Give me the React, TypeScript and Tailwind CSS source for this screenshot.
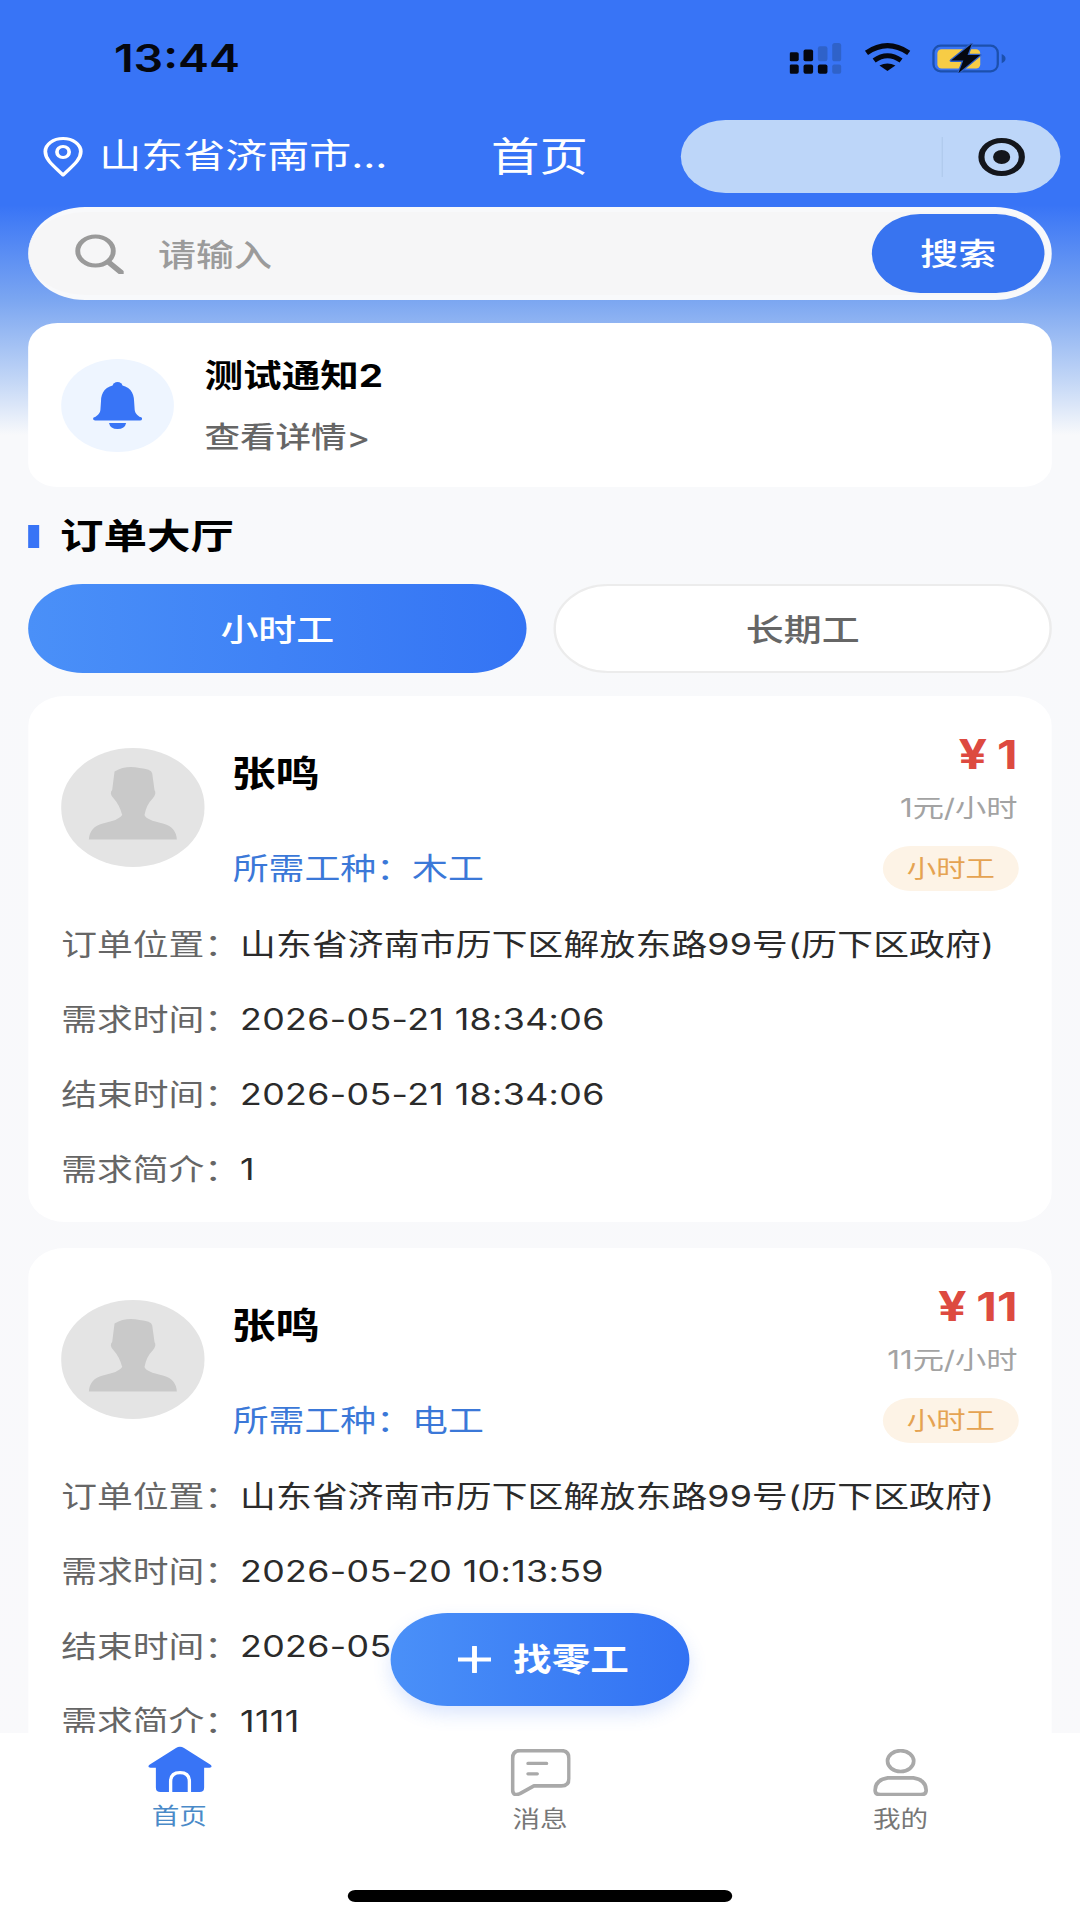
import React from "react";

function Signal() {
  const on = "#05070f";
  const off = "#2f62c9";
  return (
    <svg className="w-[43px] h-[31px]" viewBox="90 70 165 95" preserveAspectRatio="none">
      <rect x="88" y="98" width="30" height="28" rx="6" fill={on} />
      <rect x="88" y="136" width="30" height="28" rx="6" fill={on} />
      <rect x="133" y="90" width="30" height="36" rx="6" fill={on} />
      <rect x="133" y="136" width="30" height="28" rx="6" fill={on} />
      <rect x="178" y="80" width="30" height="46" rx="7" fill={off} />
      <rect x="178" y="136" width="30" height="28" rx="6" fill={on} />
      <rect x="223" y="70" width="28" height="56" rx="8" fill={off} />
      <rect x="223" y="136" width="28" height="28" rx="6" fill={off} />
    </svg>
  );
}

function Wifi() {
  return (
    <svg className="w-[38px] h-[28px] ml-[18px]" viewBox="313 72 140 88" preserveAspectRatio="none">
      <path d="M319 103 Q382 58 446 103" fill="none" stroke="#05070f" strokeWidth="16" />
      <path d="M342 127 Q382 97 423 127" fill="none" stroke="#05070f" strokeWidth="15" />
      <path d="M358 143 Q382 130 406 143 L382 160 Z" fill="#05070f" />
    </svg>
  );
}

function Battery() {
  return (
    <svg className="w-[61px] h-[30px] ml-[17px]" viewBox="515 68 230 92" preserveAspectRatio="none">
      <rect x="520" y="76" width="198" height="79" rx="22" fill="none" stroke="#1c50ad" strokeWidth="7" />
      <rect x="532" y="87" width="132" height="59" rx="13" fill="#f7cc45" />
      <path d="M730 102 Q742 108 742 116 Q742 124 730 130 Z" fill="#1c50ad" />
      <path
        d="M638 70 L574 122 L612 122 L597 160 L664 105 L625 105 Z"
        fill="#05070f"
        stroke="#2f62c9"
        strokeWidth="8"
        paintOrder="stroke"
        strokeLinejoin="round"
      />
    </svg>
  );
}

function Pin() {
  return (
    <svg className="w-[33px] h-[40px] shrink-0" viewBox="0 0 33 40">
      <path
        d="M16.5 38 C9 29 2 23 2 14.5 A14.5 13 0 0 1 31 14.5 C31 23 24 29 16.5 38 Z"
        fill="none"
        stroke="#fff"
        strokeWidth="3"
        strokeLinejoin="round"
      />
      <ellipse cx="16.5" cy="15" rx="5" ry="5.5" fill="none" stroke="#fff" strokeWidth="3" />
    </svg>
  );
}

function Magnifier() {
  return (
    <svg className="w-[40px] h-[40px] shrink-0" viewBox="0 0 40 40">
      <circle cx="17" cy="17" r="14.5" fill="none" stroke="#9a9a9a" strokeWidth="4" />
      <path d="M27.5 28 L38 38.5" stroke="#9a9a9a" strokeWidth="5" strokeLinecap="round" />
    </svg>
  );
}

function Bell() {
  return (
    <svg className="w-[40px] h-[47px]" viewBox="0 0 40 47">
      <circle cx="20" cy="4" r="4" fill="#3874f6" />
      <path
        d="M20 3 C10 3 6.5 11 6.5 19 L6 28 C5.5 32 3 34 1 35.5 L39 35.5 C37 34 34.5 32 34 28 L33.5 19 C33.5 11 30 3 20 3 Z"
        fill="#3874f6"
      />
      <rect x="0" y="35" width="40" height="3.4" rx="1.7" fill="#3874f6" />
      <path d="M13 41 L27 41 Q26 47 20 47 Q14 47 13 41 Z" fill="#3874f6" />
    </svg>
  );
}

function Person() {
  return (
    <svg className="w-full h-full" viewBox="65 55 430 355" preserveAspectRatio="none">
      <path
        d="M225 125 Q260 105 300 115 Q335 118 338 130 L345 180 Q352 190 340 205 Q320 225 315 255 Q320 270 370 280 Q410 290 412 328 L148 328 Q150 290 190 280 Q240 270 248 255 Q240 225 222 205 Q208 190 218 180 Z"
        fill="#c9c9c9"
      />
    </svg>
  );
}

function HomeIcon() {
  return (
    <svg className="w-[52px] h-[46px]" viewBox="55 32 190 140" preserveAspectRatio="none">
      <path
        d="M138 38 Q150 30 162 38 L240 88 Q250 96 238 98 L222 98 L222 158 Q222 172 208 172 L92 172 Q78 172 78 158 L78 98 L62 98 Q50 96 60 88 Z"
        fill="#3874f6"
      />
      <path
        d="M122 172 L122 140 Q122 113 150 113 Q178 113 178 140 L178 172"
        fill="none"
        stroke="#fff"
        strokeWidth="10"
      />
    </svg>
  );
}

function MessageIcon() {
  return (
    <svg className="w-[49px] h-[47px]" viewBox="60 42 180 140" preserveAspectRatio="none">
      <path
        d="M88 47 L212 47 Q235 47 235 70 L235 130 Q235 152 212 152 L130 152 L88 175 Q68 184 66 165 L66 70 Q66 47 88 47 Z"
        fill="none"
        stroke="#a9a9a9"
        strokeWidth="11"
        strokeLinejoin="round"
      />
      <path d="M112 85 L168 85 M112 116 L140 116" stroke="#a9a9a9" strokeWidth="10" strokeLinecap="round" />
    </svg>
  );
}

function UserIcon() {
  return (
    <svg className="w-[45px] h-[47px]" viewBox="68 42 164 140" preserveAspectRatio="none">
      <ellipse cx="150" cy="78" rx="39" ry="31" fill="none" stroke="#a9a9a9" strokeWidth="11" />
      <path
        d="M112 128 L188 128 Q226 134 226 165 Q226 178 210 178 L90 178 Q74 178 74 165 Q74 134 112 128 Z"
        fill="none"
        stroke="#a9a9a9"
        strokeWidth="11"
      />
    </svg>
  );
}

function Row({ label, value }: { label: string; value: string }) {
  const long = value.length > 20;
  return (
    <div className="h-[75px] flex items-center text-[29.2px] whitespace-nowrap">
      <span className="w-[146px] shrink-0 text-[#666]">{label}</span>
      <span className={long ? "text-[#2b2b2b] tracking-[0.17px]" : "text-[#2b2b2b] tracking-[0.3px]"}>{value}</span>
    </div>
  );
}

type Order = {
  yuan: string;
  unit: string;
  skill: string;
  rows: [string, string][];
};

function OrderCard({ order }: { order: Order }) {
  return (
    <div className="shrink-0 h-[526px] bg-white rounded-[30px] pt-[36px] pl-[27px] pr-[27px]">
      <div className="h-[175.5px] flex">
        <div className="w-[117px] h-[119px] mt-[16px] rounded-full bg-[#e4e4e4] shrink-0 overflow-hidden">
          <Person />
        </div>
        <div className="ml-[22px] flex flex-col">
          <div className="h-[50px] mt-[17px] flex items-center text-[36px] font-bold text-black leading-none">张鸣</div>
          <div className="h-[50px] mt-[45px] flex items-center pl-[1px] text-[29.3px] text-[#3b78d8] leading-none">
            所需工种：{order.skill}
          </div>
        </div>
        <div className="ml-auto flex flex-col items-end">
          <div className="h-[44px] mr-[1px] flex items-center text-[39px] font-bold text-[#dd4a40] leading-none">
            <span className="mr-[8px] text-[41px]">¥</span>
            {order.yuan}
          </div>
          <div className="h-[36px] mr-[1px] mt-[14px] flex items-center text-[25.5px] text-[#a3a3a3] leading-none">
            {order.unit}
          </div>
          <div className="h-[45px] mt-[20px] w-[111px] rounded-full bg-[#fdf3e6] flex items-center justify-center text-[24px] text-[#e5a352] leading-none">
            小时工
          </div>
        </div>
      </div>
      {order.rows.map(([l, v]) => (
        <Row key={l} label={l} value={v} />
      ))}
    </div>
  );
}

const orders: Order[] = [
  {
    yuan: "1",
    unit: "1元/小时",
    skill: "木工",
    rows: [
      ["订单位置：", "山东省济南市历下区解放东路99号(历下区政府)"],
      ["需求时间：", "2026-05-21 18:34:06"],
      ["结束时间：", "2026-05-21 18:34:06"],
      ["需求简介：", "1"],
    ],
  },
  {
    yuan: "11",
    unit: "11元/小时",
    skill: "电工",
    rows: [
      ["订单位置：", "山东省济南市历下区解放东路99号(历下区政府)"],
      ["需求时间：", "2026-05-20 10:13:59"],
      ["结束时间：", "2026-05-20 10:13:59"],
      ["需求简介：", "1111"],
    ],
  },
];

export default function App() {
  return (
    <div className="w-[1080px] h-[1920px] overflow-hidden">
      <div className="relative w-[882px] h-[1920px] origin-top-left scale-x-[1.2245] flex flex-col overflow-hidden font-['Inter','Noto_Sans_CJK_SC',sans-serif] bg-[linear-gradient(180deg,#3874f6_0px,#3874f6_205px,#7ba6f1_300px,#c2d6f6_380px,#f8f9fb_435px,#f9f9fb_1920px)]">
        {/* status bar */}
        <div className="h-[120px] shrink-0 flex items-start pt-[43px] pl-[93px]">
          <span className="text-[38px] leading-[31px] font-semibold text-[#05070f]">13:44</span>
          <div className="ml-auto mr-[60px] flex items-start">
            <Signal />
            <Wifi />
            <Battery />
          </div>
        </div>

        {/* nav */}
        <div className="h-[73px] shrink-0 flex items-center pl-[35px] pr-[16px]">
          <Pin />
          <span className="ml-[13px] w-[286px] text-[34.3px] text-white whitespace-nowrap leading-none">山东省济南市...</span>
          <span className="ml-[34px] mt-[3px] text-[39.5px] text-white leading-none">首页</span>
          <div className="ml-auto w-[310px] h-[73px] rounded-full bg-[#bdd6f9] flex items-center">
            <div className="ml-[213px] w-[1px] h-[40px] bg-[#b0c9ec]" />
            <div className="ml-[29px] w-[38px] h-[38px] rounded-full border-[5px] border-[#14161c] flex items-center justify-center">
              <div className="w-[14px] h-[14px] rounded-full bg-[#14161c]" />
            </div>
          </div>
        </div>

        {/* search */}
        <div className="mt-[14px] mx-[23px] h-[93px] shrink-0 rounded-full bg-[#f6f6f7] border-[5px] border-[#f8f9fb] border-l-0 flex items-center pl-[38px] pr-[1px]">
          <Magnifier />
          <span className="ml-[28px] mt-[1px] text-[31px] font-medium text-[#9b9b9b] leading-none">请输入</span>
          <div className="ml-auto w-[141px] h-[79px] rounded-full bg-[#3874f0] flex items-center justify-center text-[31px] font-medium text-white leading-none">
            搜索
          </div>
        </div>

        {/* notice */}
        <div className="mt-[23px] mx-[23px] h-[164px] shrink-0 rounded-[24px] bg-white flex items-center pl-[27px]">
          <div className="w-[92px] h-[93px] rounded-full bg-[#eef5ff] flex items-center justify-center">
            <Bell />
          </div>
          <div className="ml-[25px] flex flex-col pt-[3px]">
            <div className="text-[31.5px] font-bold text-black leading-[40px]">测试通知2</div>
            <div className="mt-[22px] text-[29px] font-medium text-[#666] leading-[40px]">查看详情&gt;</div>
          </div>
        </div>

        {/* title */}
        <div className="mt-[29px] mx-[23px] h-[40px] shrink-0 flex items-center">
          <div className="w-[9px] h-[23px] bg-[#3874f6]" />
          <span className="ml-[17px] mt-[1px] text-[35.5px] font-bold text-black leading-none">订单大厅</span>
        </div>

        {/* tabs */}
        <div className="mt-[28px] mx-[23px] shrink-0 flex gap-[22px]">
          <div className="w-[407px] h-[89px] rounded-full bg-[linear-gradient(90deg,#4a90f8,#3474f4)] flex items-center justify-center text-[31px] font-medium text-white leading-none pt-[1px]">
            小时工
          </div>
          <div className="w-[407px] h-[89px] rounded-full bg-white border-2 border-[#ececec] flex items-center justify-center text-[31px] font-medium text-[#666] leading-none pt-[1px]">
            长期工
          </div>
        </div>

        {/* list */}
        <div className="mt-[23px] mx-[23px] flex-1 min-h-0 overflow-hidden flex flex-col gap-[26px]">
          {orders.map((o) => (
            <OrderCard key={o.yuan} order={o} />
          ))}
        </div>

        {/* tab bar */}
        <div className="h-[187px] shrink-0 bg-white flex flex-col">
          <div className="flex pt-[13px]">
            <div className="w-[293px] flex flex-col items-center">
              <HomeIcon />
              <span className="mt-[13px] text-[22.5px] text-[#4a8ac8] leading-none">首页</span>
            </div>
            <div className="w-[296px] flex flex-col items-center pt-[3px]">
              <MessageIcon />
              <span className="mt-[12px] text-[22.5px] text-[#777] leading-none">消息</span>
            </div>
            <div className="w-[293px] flex flex-col items-center pt-[3px]">
              <UserIcon />
              <span className="mt-[12px] text-[22.5px] text-[#777] leading-none">我的</span>
            </div>
          </div>
          <div className="mt-auto mb-[18px] ml-[284px] w-[314px] h-[12px] rounded-full bg-black" />
        </div>

        {/* floating action */}
        <div className="absolute left-[319px] top-[1613px] w-[244px] h-[93px] rounded-full bg-[linear-gradient(90deg,#4a90f8,#3272f3)] shadow-[0_8px_16px_rgba(56,116,246,0.18)] flex items-center pl-[55px]">
          <svg className="w-[27px] h-[27px]" viewBox="0 0 27 27">
            <path d="M13.5 1 V26 M0 13.5 H27" stroke="#fff" strokeWidth="4" strokeLinecap="round" />
          </svg>
          <span className="ml-[18px] text-[31.5px] font-bold text-white leading-none">找零工</span>
        </div>
      </div>
    </div>
  );
}
